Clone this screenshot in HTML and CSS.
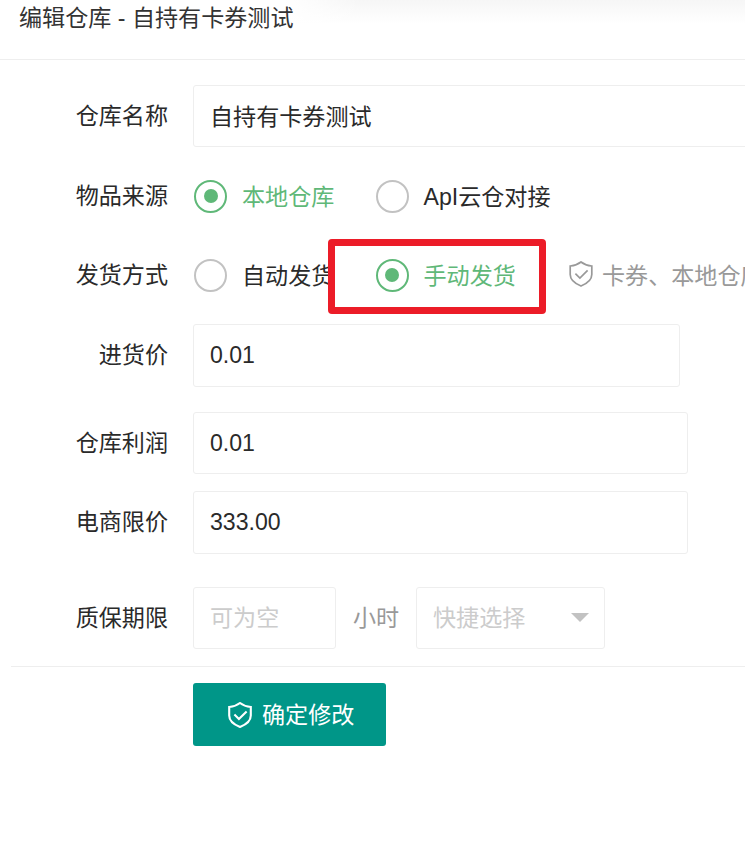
FILE: index.html
```html
<!DOCTYPE html>
<html lang="zh-CN">
<head>
<meta charset="utf-8">
<title>编辑仓库</title>
<link rel="stylesheet" href="styles.css">
</head>
<body>
<svg class="defs" width="0" height="0" aria-hidden="true">
  <symbol id="shield" viewBox="0 0 24 26">
    <path d="M12 1C9.500 3 6 4.500 1.200 5V13.500C1.200 19 5.500 22.400 12 25C18.500 22.400 22.800 19 22.800 13.500V5C18 4.500 14.500 3 12 1Z"/>
    <path d="M6.400 12.600L10.900 17L18.600 9.400"/>
  </symbol>
</svg>
<header class="header"><h1 class="title">编辑仓库 - 自持有卡券测试</h1></header>
<main class="form">
  <div class="row name">
    <span class="label">仓库名称</span>
    <div class="box wide">自持有卡券测试</div>
  </div>
  <div class="row source">
    <span class="label">物品来源</span>
    <div class="radio checked"><i class="dot"></i><span>本地仓库</span></div>
    <div class="radio"><i class="dot"></i><span>ApI云仓对接</span></div>
  </div>
  <div class="row delivery">
    <span class="label">发货方式</span>
    <div class="radio"><i class="dot"></i><span>自动发货</span></div>
    <div class="radio checked marked"><i class="dot"></i><span>手动发货</span></div>
    <div class="hint"><svg class="icon"><use href="#shield"/></svg><span>卡券、本地仓库</span></div>
  </div>
  <div class="row cost">
    <span class="label">进货价</span>
    <div class="box number short">0.01</div>
  </div>
  <div class="row profit">
    <span class="label">仓库利润</span>
    <div class="box number">0.01</div>
  </div>
  <div class="row limit">
    <span class="label">电商限价</span>
    <div class="box number">333.00</div>
  </div>
  <div class="row warranty">
    <span class="label">质保期限</span>
    <div class="box hours">可为空</div>
    <span class="unit">小时</span>
    <div class="box select"><span>快捷选择</span><i class="caret"></i></div>
  </div>
  <hr class="divider">
  <button class="submit" type="button"><svg class="icon"><use href="#shield"/></svg><span>确定修改</span></button>
</main>
</body>
</html>
```
FILE: styles.css
```css
*, ::before, ::after { box-sizing: border-box; }
body {
  margin: 0;
  height: 847px;
  overflow: hidden;
  background: #fff;
  color: #2a2a2a;
  font: 23.1px/34px "Liberation Sans", "Noto Sans CJK SC", sans-serif;
  white-space: nowrap;
}
.defs { position: absolute; }
.header {
  height: 60px;
  padding: 1px 19px 0;
  border-bottom: 1px solid #eee;
  background:
    linear-gradient(90deg, #fff 285px, rgba(255, 255, 255, 0) 360px),
    linear-gradient(#f6f6f6, #fff 24px);
}
.title { margin: 0; font-size: 23.1px; line-height: 34px; font-weight: 400; color: #333; }
.form { padding-top: 25px; overflow: hidden; }
.row { display: flex; height: 62px; align-items: center; }
.label { width: 168px; margin-right: 25px; flex: none; text-align: right; }
.box {
  display: flex;
  align-items: center;
  flex: none;
  width: 495px;
  height: 100%;
  padding: 0 16px;
  border: 1px solid #eee;
  border-radius: 3px;
}
.wide { width: 560px; padding-top: 2px; }
.short { width: 487px; }
.source { margin-top: 18px; }
.delivery { margin-top: 17px; }
.cost { height: 63px; margin-top: 18px; }
.profit { margin-top: 25px; }
.limit { height: 63px; margin-top: 17px; }
.cost .label, .limit .label, .cost .box, .limit .box { padding-bottom: 2px; }
.warranty { margin-top: 33px; }

.radio { position: relative; display: flex; align-items: center; flex: none; width: 181.500px; padding-left: 1px; }
.radio span { padding-top: 1px; }
.dot {
  display: grid;
  place-items: center;
  width: 33px;
  height: 33px;
  margin-right: 15px;
  border: 2px solid #c2c2c2;
  border-radius: 50%;
}
.checked { color: #5fb878; }
.checked .dot { border-color: #5fb878; }
.checked .dot::after { content: ""; width: 14px; height: 14px; border-radius: 50%; background: #5fb878; }
.marked { z-index: 0; }
.marked::before {
  content: "";
  position: absolute;
  z-index: -1;
  left: -47px;
  top: -19px;
  width: 218px;
  height: 75px;
  border: 7px solid #ec1c28;
  border-radius: 4px;
  background: #fff;
}
.hint { display: flex; align-items: center; margin-left: 13px; color: #999; }
.hint span { padding-top: 1px; }
.icon { width: 24px; height: 26px; fill: none; stroke: currentColor; }
.hint .icon { margin: 0 9px 2px 0; stroke-width: 1.700; }

.hours { width: 143px; color: #ccc; }
.unit { width: 80px; text-align: center; color: #999; }
.select { width: 189px; justify-content: space-between; padding-right: 15px; color: #ccc; }
.caret { border: 9px solid transparent; border-top-color: #c2c2c2; border-bottom: 0; }
.warranty .box, .warranty .label, .warranty .unit { padding-bottom: 1px; }
.divider { height: 1px; margin: 17px 0 16px 11px; border: 0; background: #eee; }
.submit {
  display: flex;
  align-items: center;
  width: 193px;
  height: 63px;
  margin-left: 193px;
  padding: 1px 0 0 35px;
  border: 0;
  border-radius: 3px;
  background: #009688;
  color: #fff;
  font: inherit;
}
.submit .icon { margin-right: 10px; stroke-width: 2.100; }
```
